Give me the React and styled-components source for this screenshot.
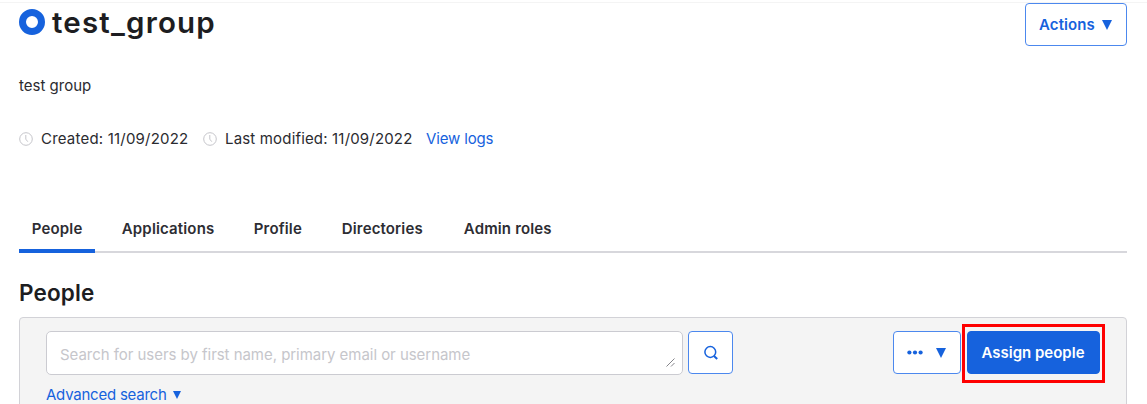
import React from "react";
import styled, { createGlobalStyle } from "styled-components";

const blue = "#1662dd";
const ink = "#1d1d21";

const GlobalStyle = createGlobalStyle`
  * { box-sizing: border-box; }
  body {
    margin: 0;
    overflow: hidden;
    background: #fff;
    color: #2b2b30;
    font: 400 15px/20px Inter, "Liberation Sans", sans-serif;
  }
`;

const Page = styled.main`
  height: 402px;
  overflow: hidden;
  margin-top: 2px;
  border-top: 1px solid #f4f4f4;
  padding: 0 20px 0 19px;
`;

const Header = styled.header`
  display: flex;
  justify-content: space-between;
  align-items: flex-start;
  height: 73px;
`;

const TitleRow = styled.div`
  display: flex;
  align-items: center;
  gap: 7px;
  padding-top: 1px;
`;

const GroupMark = styled.span`
  width: 26px;
  height: 26px;
  border: 7px solid ${blue};
  border-radius: 50%;
`;

const Label = styled.span`
  white-space: nowrap;
  letter-spacing: ${(p) => p.$track || 0}px;
`;

const Title = styled.h1`
  margin: 0;
  color: ${ink};
  font-size: 29.5px;
  line-height: 36px;
  font-weight: 600;
`;

const Button = styled.button`
  display: flex;
  align-items: center;
  justify-content: center;
  flex: none;
  gap: ${(p) => p.$gap || 0}px;
  width: ${(p) => p.$width}px;
  height: 43px;
  padding: 0 1px 0 0;
  border: 1px solid ${(p) => (p.$primary ? blue : "#4c88ee")};
  border-radius: 4px;
  background: ${(p) => (p.$primary ? blue : "#fff")};
  color: ${(p) => (p.$primary ? "#fff" : blue)};
  font: 600 15px/20px Inter, "Liberation Sans", sans-serif;
`;

const Description = styled.p`
  margin: 0;
  height: 20px;
`;

const Meta = styled.div`
  display: flex;
  align-items: center;
  height: 20px;
  margin-top: 33px;
`;

const MetaItem = styled.span`
  display: flex;
  align-items: center;
  gap: 8px;
  width: ${(p) => p.$width}px;
`;

const Link = styled.a`
  display: inline-flex;
  align-items: center;
  gap: 6px;
  color: ${blue};
`;

const Tabs = styled.nav`
  display: flex;
  height: 46px;
  margin-top: 58px;
  border-bottom: 2px solid #d7d7dc;
`;

const Tab = styled.a`
  flex: none;
  width: ${(p) => p.$width}px;
  height: 46px;
  padding: 12px 0 0 12.8px;
  border-bottom: 4px solid ${(p) => (p.$active ? blue : "transparent")};
  font-weight: 600;
  color: #2d2d33;
  margin-right: 14px;
`;

const SectionTitle = styled.h2`
  margin: 26px 0 10px;
  color: ${ink};
  font-size: 22.5px;
  line-height: 28px;
  font-weight: 600;
`;

const Panel = styled.section`
  height: 120px;
  padding: 13px 26px 0;
  border: 1px solid #d2d2d7;
  border-radius: 4px;
  background: #f4f4f4;
`;

const Toolbar = styled.div`
  display: flex;
  align-items: flex-start;
  gap: 6px;
  height: 44px;
`;

const SearchField = styled.div`
  display: flex;
  justify-content: space-between;
  align-items: flex-end;
  width: 637px;
  height: 44px;
  padding: 0 7px 7px 13px;
  border: 1px solid #cbcbd1;
  border-radius: 5px;
  background: #fff;
`;

const Placeholder = styled(Label)`
  padding-bottom: 2px;
  color: #c6c6cb;
`;

const SearchButton = styled(Button)`
  margin-left: -1px;
  padding: 0;
`;

const Actions = styled.div`
  display: flex;
  gap: 6px;
  margin-left: auto;
`;

const Highlight = styled.div`
  flex: none;
  width: 143px;
  height: 59px;
  margin: -7px -5px 0 -5px;
  padding: 4px 2px;
  border: 3px solid #fe0000;
`;

const Advanced = styled.div`
  margin-top: 10px;
`;

const Clock = () => (
  <svg width="14" height="14" viewBox="0 0 14 14" fill="none" stroke="#c5c5ca">
    <circle cx="7" cy="7" r="6.3" />
    <path d="M6.8 3v4.2l2 2.5" />
  </svg>
);

const Caret = ({ width = 10, height = 10 }) => (
  <svg width={width} height={height} viewBox="0 0 10 9" preserveAspectRatio="none">
    <path d="M0 0h10L5 9z" fill={blue} />
  </svg>
);

const SearchIcon = () => (
  <svg width="16" height="16" viewBox="0 0 16 16" fill="none" stroke={blue} strokeWidth="1.5">
    <circle cx="7.3" cy="7" r="5.4" />
    <path d="M11 11l3.2 3" strokeWidth="2" />
  </svg>
);

const Dots = () => (
  <svg width="16" height="5" viewBox="0 0 16 5" fill={blue}>
    <circle cx="2.4" cy="2.5" r="2.1" />
    <circle cx="8" cy="2.5" r="2.1" />
    <circle cx="13.6" cy="2.5" r="2.1" />
  </svg>
);

const Grip = () => (
  <svg width="9" height="9" viewBox="0 0 9 9" stroke="#77777d" fill="none">
    <path d="M.5 8.5l8-8M5 8.5L8.5 5" strokeWidth=".9" />
  </svg>
);

const tabs = [
  { name: "People", width: 76 },
  { name: "Applications", width: 118 },
  { name: "Profile", width: 74 },
  { name: "Directories", width: 108 },
  { name: "Admin roles", width: 113 },
];

export default function App() {
  return (
    <>
      <GlobalStyle />
      <Page>
        <Header>
          <TitleRow>
            <GroupMark />
            <Title><Label $track={1.2}>test_group</Label></Title>
          </TitleRow>
          <Button $width={102} $gap={7}>
            <Label $track={0.1}>Actions</Label>
            <Caret />
          </Button>
        </Header>
        <Description><Label>test group</Label></Description>
        <Meta>
          <MetaItem $width={184}><Clock /><Label $track={0.2}>Created: 11/09/2022</Label></MetaItem>
          <MetaItem $width={223}><Clock /><Label $track={0.17}>Last modified: 11/09/2022</Label></MetaItem>
          <Link><Label $track={-0.15}>View logs</Label></Link>
        </Meta>
        <Tabs>
          {tabs.map((tab, i) => (
            <Tab key={tab.name} $width={tab.width} $active={i === 0}>
              <Label $track={0.15}>{tab.name}</Label>
            </Tab>
          ))}
        </Tabs>
        <SectionTitle><Label $track={0.15}>People</Label></SectionTitle>
        <Panel>
          <Toolbar>
            <SearchField>
              <Placeholder $track={-0.04}>
                Search for users by first name, primary email or username
              </Placeholder>
              <Grip />
            </SearchField>
            <SearchButton $width={45} aria-label="Search"><SearchIcon /></SearchButton>
            <Actions>
              <Button $width={68} $gap={13} aria-label="More actions"><Dots /><Caret /></Button>
              <Highlight>
                <Button $width={133} $primary><Label>Assign people</Label></Button>
              </Highlight>
            </Actions>
          </Toolbar>
          <Advanced>
            <Link><Label $track={-0.23}>Advanced search</Label><Caret width={8} height={8} /></Link>
          </Advanced>
        </Panel>
      </Page>
    </>
  );
}
